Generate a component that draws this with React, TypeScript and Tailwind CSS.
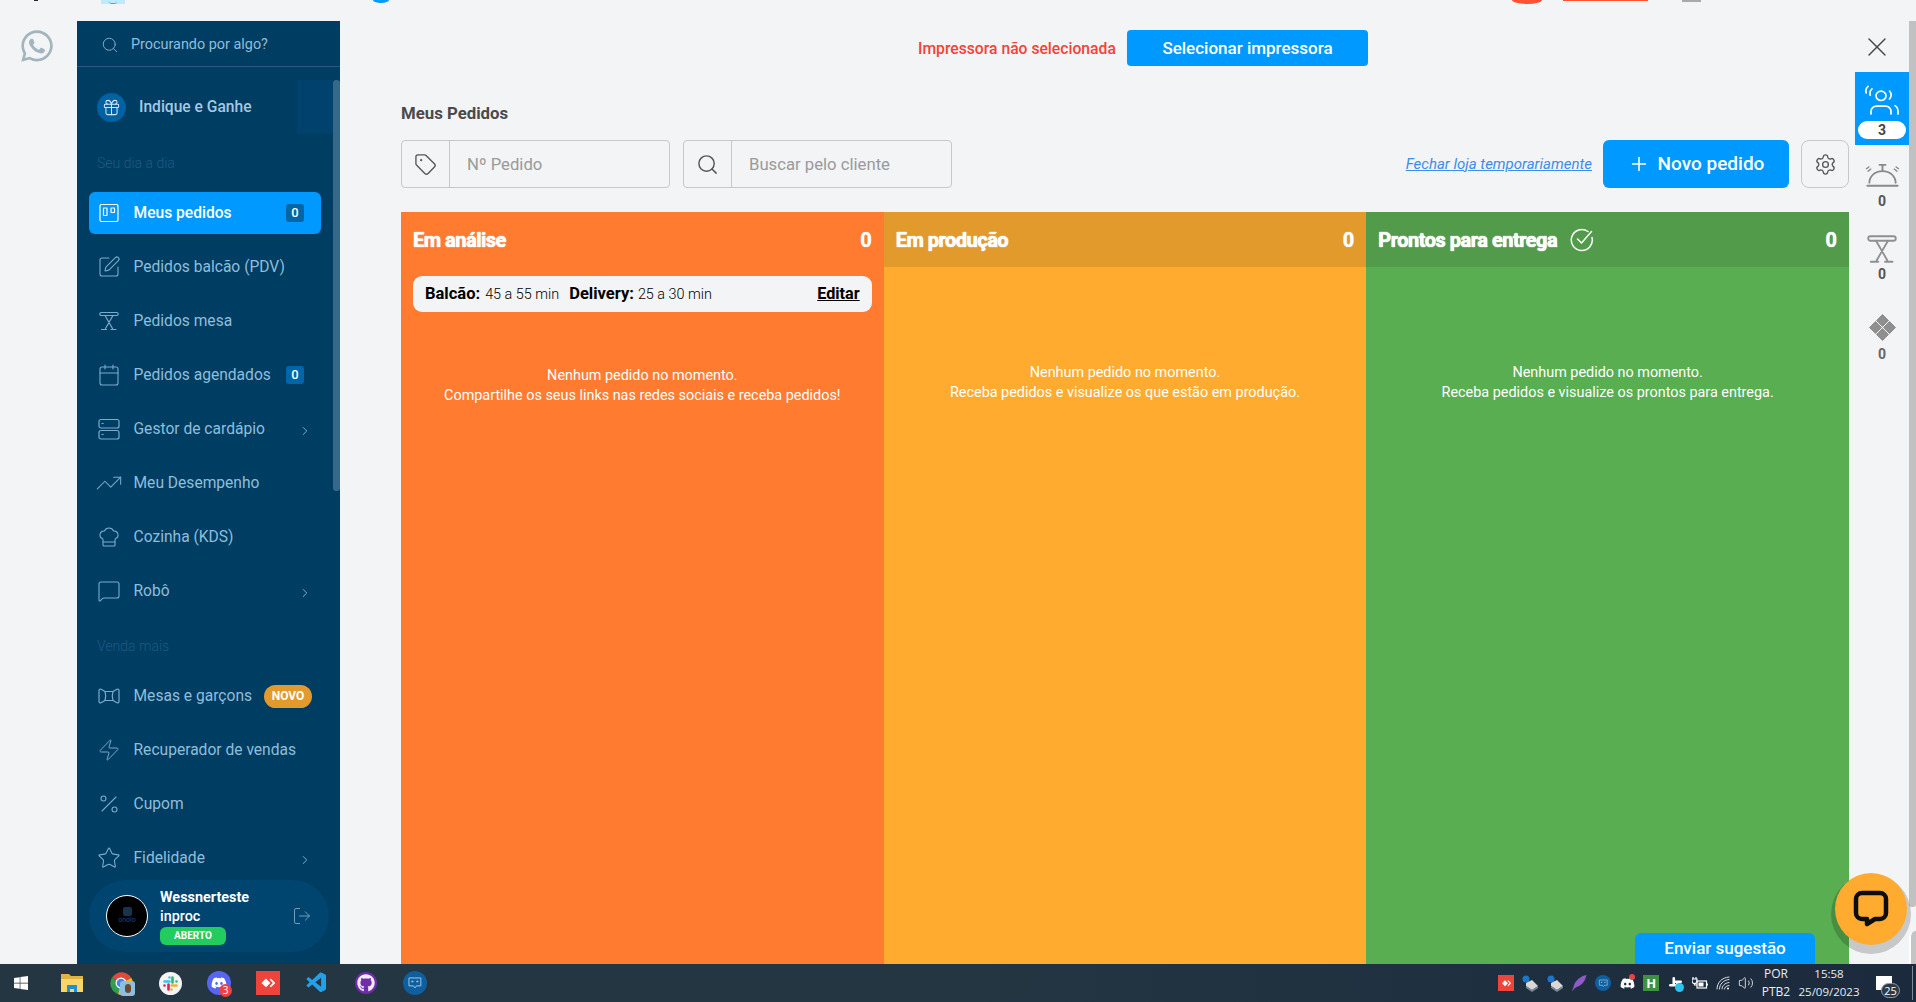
import React from "react";
import {
  Search, Gift, SquarePen, Calendar, TrendingUp, ChefHat, MessageSquare, Zap, Percent, Star,
  ChevronRight, LogOut, Tag, Plus, Settings, X, Volume2,
} from "lucide-react";
import { FaWhatsapp, FaWindows, FaGithub, FaDiscord } from "react-icons/fa";
import { VscVscode } from "react-icons/vsc";

const s = { fill: "none", stroke: "currentColor", strokeWidth: 1.2, strokeLinecap: "round" as const, strokeLinejoin: "round" as const };

const BoardIcon = () => (
  <svg width="20" height="20" viewBox="0 0 20 20" {...s}>
    <rect x="1" y="1.5" width="18" height="17" rx="1.5" />
    <rect x="4.5" y="5" width="3.5" height="7.5" rx=".4" />
    <rect x="12" y="5" width="3.5" height="4.5" rx=".4" />
  </svg>
);
const TableIcon = ({ size = 20 }: { size?: number }) => (
  <svg width={size} height={size} viewBox="0 0 20 20" {...s}>
    <rect x="0.8" y="1.5" width="18.4" height="3" rx="1.5" />
    <path d="M6 4.5 13.5 17.5M14 4.5 6.5 17.5M2.5 18.5h5M12 18.5h5" />
  </svg>
);
const MenuIcon = () => (
  <svg width="22" height="22" viewBox="0 0 22 22" {...s}>
    <rect x="1" y="1.5" width="20" height="8.5" rx="2" />
    <rect x="1" y="12.5" width="20" height="8.5" rx="2" />
    <path d="M4 5.5h1.2M4 16.5h1.2" />
  </svg>
);
const BowIcon = () => (
  <svg width="22" height="16" viewBox="0 0 22 16" {...s}>
    <path d="M7 3.5 3 1.2C2 .8 1 1.3 1 2.5v11c0 1.2 1 1.7 2 1.3l4-2.3C7.800 10 7.800 6 7 3.500z" />
    <path d="M15 3.5l4-2.3c1-.4 2 .1 2 1.3v11c0 1.2-1 1.7-2 1.3l-4-2.3C14.200 10 14.200 6 15 3.500z" />
    <path d="M7 3.5h8M7 12.500h8" />
  </svg>
);
const BellIcon = () => (
  <svg width="35" height="25" viewBox="0 0 36 30" preserveAspectRatio="none" fill="none" stroke="#8a8a8a" strokeWidth="2" strokeLinecap="round">
    <path d="M4.5 25c0-8 5.8-14 13.500-14s13.500 6 13.500 14" />
    <path d="M15 3.500h6M18 3.500V10" />
    <path d="M2.500 28.500h31" strokeWidth="2.200" />
    <path d="M1.500 8 4 6M3 11l3-2.500M34.500 8 32 6M33 11l-3-2.500" strokeWidth="1.500" />
  </svg>
);
const PersonIcon = () => (
  <svg width="35" height="31" viewBox="0 0 35 33" preserveAspectRatio="none" fill="none" stroke="#fff" strokeWidth="1.700" strokeLinecap="round">
    <circle cx="16" cy="11.500" r="5" />
    <path d="M7 4c-2 2-2.500 4-1.800 7M3 1.500C.8 3.500.5 6 1.200 8.500M24.500 6.500c2 2.500 2 6 0 8.500" />
    <path d="M6 31v-3c0-3 2.500-5.500 5.500-5.500h9c3 0 5.500 2.500 5.500 5.500v3M30 22c2.500 1.500 3.500 4.500 3 9" />
  </svg>
);
const DiamondIcon = () => (
  <svg width="27" height="27" viewBox="0 0 27 27" fill="#8f8f8f" stroke="#8f8f8f" strokeWidth="1" strokeLinejoin="round">
    <path d="M13.500 .5l6 6-6 6-6-6zM6.500 7.500l6 6-6 6-6-6zM20.500 7.500l6 6-6 6-6-6zM13.500 14.500l6 6-6 6-6-6z" />
  </svg>
);
const CheckCircle = () => (
  <svg width="24" height="24" viewBox="0 0 24 24" fill="none" stroke="#fff" strokeWidth="1.500" strokeLinecap="round" strokeLinejoin="round">
    <path d="M18 3.500A10.500 10.500 0 1 0 22 9.500" />
    <path d="M7.500 11l4 4L21.500 3.500" />
  </svg>
);

const navClass = "ml-[12px] mr-[19px] mb-[12px] flex h-[42px] shrink-0 items-center rounded-[6px] pl-[9px] text-[15.600px] text-[#8fbddc]";
const iconBox = "flex h-[22px] w-[21px] items-center justify-center text-[#7aabcb] [&>svg]:shrink-0";

function NavItem({ icon, label, active, badge, chevron, novo, last }: { icon: React.ReactNode; label: string; active?: boolean; badge?: boolean; chevron?: boolean; novo?: boolean; last?: boolean }) {
  return (
    <div className={navClass + (active ? " !text-white bg-[#0099ff] font-medium" : "") + (last ? " !mb-0" : "")}>
      <span className={iconBox + (active ? " !text-white" : "")}>{icon}</span>
      <span className="ml-[14.500px] mt-[1px] whitespace-nowrap">{label}</span>
      {badge && <span className="ml-auto mr-[17px] flex h-[18px] w-[18px] items-center justify-center rounded-[3px] bg-[#0066a8] text-[13px] font-medium text-white">0</span>}
      {chevron && <ChevronRight size={14} strokeWidth={1.500} className="ml-auto mr-[9px] mt-[3px] text-[#8fbddc]" />}
      {novo && <span className="ml-auto mr-[9px] flex h-[23px] w-[48px] items-center justify-center rounded-full bg-[#e29a2c] text-[12px] font-bold text-white">NOVO</span>}
    </div>
  );
}

function Column({ title, head, body, lines, check, children, textPt }: { title: string; head: string; body: string; lines: string[]; check?: boolean; children?: React.ReactNode; textPt: string }) {
  return (
    <section className={"flex w-[482.670px] flex-col " + body}>
      <header className={"flex h-[55px] shrink-0 items-center px-[12px] text-white " + head}>
        <h2 className="text-[20px] font-bold tracking-[-0.5px] [text-shadow:0_0_1px_#fff,0_0_1px_#fff]">{title}</h2>
        {check && <span className="ml-[13px] flex"><CheckCircle /></span>}
        <span className="ml-auto text-[20px] font-bold [text-shadow:0_0_1px_#fff]">0</span>
      </header>
      {children}
      <div className={"text-center text-[14.400px] leading-[19.500px] text-white " + textPt}>
        {lines.map((l) => (
          <p key={l}>{l}</p>
        ))}
      </div>
    </section>
  );
}

const ChromeIcon = () => (
  <span className="relative flex h-[24px] w-[24px]">
    <svg width="24" height="24" viewBox="0 0 24 24">
      <path d="M12 12 3 6.500A11.500 11.500 0 0 1 22.500 7z" fill="#e2483c" />
      <path d="M12 12 3 6.500A11.500 11.500 0 0 0 9 23.200z" fill="#2f9e4f" />
      <path d="M12 12l10.500-5A11.500 11.500 0 0 1 9 23.200z" fill="#f4c20d" />
      <circle cx="12" cy="12" r="5.500" fill="#fff" />
      <circle cx="12" cy="12" r="4.300" fill="#4285f4" />
    </svg>
    <span className="absolute left-[11px] top-[10px] flex h-[15px] w-[15px] items-center justify-center rounded-[3px] bg-[#8cbfe0]">
      <span className="h-[9px] w-[6px] rounded-full bg-[#6b4a32]" />
    </span>
  </span>
);
const SlackGlyph = () => (
  <svg width="15" height="15" viewBox="0 0 15 15" strokeWidth="2.600" strokeLinecap="round" fill="none">
    <path d="M1.500 5.500h5M6.500 1.500h.01" stroke="#36c5f0" />
    <path d="M9.500 1.500v5M13.500 5.500h.01" stroke="#2eb67d" />
    <path d="M8.500 9.500h5M8.500 13.500h.01" stroke="#ecb22e" />
    <path d="M5.500 8.500v5M1.500 9.500h.01" stroke="#e01e5a" />
  </svg>
);
const SlackIcon = () => (
  <span className="flex h-[23px] w-[23px] items-center justify-center rounded-full bg-[#f4f4f4]">
    <SlackGlyph />
  </span>
);
const DiscordIcon = () => (
  <span className="relative flex h-[24px] w-[24px] items-center justify-center rounded-full bg-[#5865f2]">
    <FaDiscord size={16} color="#fff" />
    <span className="absolute left-[12px] top-[13px] flex h-[13px] w-[13px] items-center justify-center rounded-full bg-[#ed4245] text-[10px] font-medium text-white">3</span>
  </span>
);
const AnyDesk = ({ size }: { size: number }) => (
  <span className="flex shrink-0 items-center justify-center bg-[#ef443b]" style={{ width: size, height: size }}>
    <svg width={size * 0.66} height={size * 0.66} viewBox="0 0 16 16" fill="#fff">
      <path d="M6 3.500 10.500 8 6 12.500 1.500 8z" />
      <path d="M11 3.500 15.500 8 11 12.500 9.800 11.300 13 8 9.800 4.700z" />
    </svg>
  </span>
);
const OwlIcon = ({ size }: { size: number }) => (
  <span className="flex shrink-0 items-center justify-center rounded-full bg-[#0f5f9e]" style={{ width: size, height: size }}>
    <svg width={size * 0.66} height={size * 0.66} viewBox="0 0 16 16" fill="none" stroke="#9cc9ea" strokeWidth="1">
      <path d="M2 3h12v8H9.500L8 13l-1.500-2H2z" />
      <path d="M4.500 6.500h2M9.500 6.500h2" strokeWidth="1.500" />
    </svg>
  </span>
);
const FolderIcon = () => (
  <svg width="22" height="20" viewBox="0 0 22 20">
    <path d="M0 1h8l2 2h12v16H0z" fill="#e3b341" />
    <path d="M0 6h22v13H0z" fill="#f6d56b" />
    <path d="M6 12h10v7h-3v-3H9v3H6z" fill="#1f8fd8" />
  </svg>
);
const PrinterTray = () => (
  <svg className="shrink-0" width="16" height="17" viewBox="0 0 16 17">
    <circle cx="4" cy="4" r="3.500" fill="#1976c8" />
    <path d="M4 8 10 5l6 6-6 4-6-4z" fill="#d8d8d8" />
    <path d="M4 11l6 4 6-4v2l-6 4-6-4z" fill="#7d8790" />
  </svg>
);
const Feather = () => (
  <svg className="shrink-0" width="16" height="16" viewBox="0 0 16 16">
    <path d="M15.500 0C10 1 4 5 2.500 12l-1.500 4 1-.5C3 13 4.500 12.500 8 11c4-2 6.500-6 7.500-11z" fill="#8e5bc4" />
  </svg>
);
const BatteryTray = () => (
  <svg className="shrink-0" width="16" height="14" viewBox="0 0 16 14" fill="none" stroke="#fff" strokeWidth="1.200">
    <path d="M1 1v2M4 1v2M0 3h5v2a2.500 2.500 0 0 1-5 0zM2.500 7v2H5" />
    <rect x="5" y="5" width="9.500" height="7" />
    <rect x="6.500" y="6.500" width="5" height="4" fill="#fff" stroke="none" />
    <path d="M15.500 7.500v2" />
  </svg>
);
const WifiTray = () => (
  <svg className="shrink-0" width="14" height="14" viewBox="0 0 14 14" fill="none" stroke="#d8dde2" strokeWidth="1" strokeLinecap="round">
    <path d="M1 13C1 7 5.500 1.500 13 1M3.500 13c0-4.500 3.500-9 9.500-9.500M6 13c0-3 2.500-6 7-6.500M8.500 13c0-1.500 1.500-3.300 4.500-3.500" />
    <circle cx="12" cy="12.500" r="1" fill="#fff" stroke="none" />
  </svg>
);

export default function App() {
  return (
    <div className="relative flex h-[1002px] w-[1916px] flex-col overflow-hidden bg-[#f2f4f6] font-[family-name:Roboto,sans-serif]">
      {/* clipped remains of the page header */}
      <div className="flex h-[21px] shrink-0 items-start">
        <span className="ml-[34px] h-[1px] w-[4px] bg-[#1f2937]" />
        <span className="ml-[63px] flex h-[4px] w-[24px] justify-center bg-[#bfe9ff]">
          <span className="h-[4px] w-[8px] rounded-b-[3px] border-b border-[#3aa6f0]" />
        </span>
        <span className="ml-[248px] h-[3px] w-[16px] rounded-[0_0_50%_50%/0_0_100%_100%] bg-[#0099ff]" />
        <span className="ml-[1123px] h-[4px] w-[30px] rounded-[0_0_50%_50%/0_0_100%_100%] bg-[#ff5232]" />
        <span className="ml-[21px] h-[1px] w-[85px] bg-[#ff5232]" />
        <span className="ml-[34px] h-[2px] w-[19px] bg-[#a9a9a9]" />
      </div>

      <div className="relative flex min-h-0 flex-1">
        {/* whatsapp rail */}
        <div className="w-[77px] shrink-0 pl-[19px] pt-[7px]">
          <FaWhatsapp size={36} color="#a2b4bd" />
        </div>

        {/* sidebar */}
        <aside className="relative flex w-[263px] shrink-0 flex-col bg-[#003d62]">
          <div className="flex h-[46px] shrink-0 items-center border-b border-[#2c5a7c] pl-[24px] pt-[2px] text-[14.400px] text-[#8fbddc]">
            <Search size={18} strokeWidth={1.200} className="text-[#8fb3cb]" />
            <span className="ml-[12px]">Procurando por algo?</span>
          </div>
          <div className="relative mt-[13px] flex h-[54px] shrink-0 items-center pl-[20px]">
            <span className="flex h-[29px] w-[29px] items-center justify-center rounded-full bg-[#0061a3] text-[#cfe6f6]">
              <Gift size={19} strokeWidth={1.300} />
            </span>
            <span className="ml-[13px] mt-[1px] text-[15.600px] font-medium text-[#a5c9e2]">Indique e Ganhe</span>
            <span className="absolute inset-y-0 left-[220px] w-[36px] bg-[#00426e]" />
          </div>
          <div className="flex h-[58px] shrink-0 items-start pl-[20px] pt-[19px] text-[14px] font-light text-[#1f5a82]">Seu dia a dia</div>
          <NavItem icon={<BoardIcon />} label="Meus pedidos" active badge />
          <NavItem icon={<SquarePen size={24} strokeWidth={1.100} />} label="Pedidos balcão (PDV)" />
          <NavItem icon={<TableIcon />} label="Pedidos mesa" />
          <NavItem icon={<Calendar size={24} strokeWidth={1.100} />} label="Pedidos agendados" badge />
          <NavItem icon={<MenuIcon />} label="Gestor de cardápio" chevron />
          <NavItem icon={<TrendingUp size={28} strokeWidth={0.900} />} label="Meu Desempenho" />
          <NavItem icon={<ChefHat size={24} strokeWidth={1.100} />} label="Cozinha (KDS)" />
          <NavItem icon={<MessageSquare size={24} strokeWidth={1.100} />} label="Robô" chevron />
          <div className="h-[51px] shrink-0 pl-[20px] pt-[12px] text-[14px] font-light text-[#1f5a82]">Venda mais</div>
          <NavItem icon={<BowIcon />} label="Mesas e garçons" novo />
          <NavItem icon={<Zap size={24} strokeWidth={1} />} label="Recuperador de vendas" />
          <NavItem icon={<Percent size={24} strokeWidth={1.100} />} label="Cupom" />
          <NavItem icon={<Star size={24} strokeWidth={1.100} />} label="Fidelidade" chevron last />
          <div className="ml-[12px] mt-[1px] flex h-[72px] w-[240px] shrink-0 items-center rounded-full bg-[#004470] pl-[17px]">
            <span className="flex h-[42px] w-[42px] shrink-0 flex-col items-center justify-center rounded-full border border-white bg-black">
              <span className="h-[9px] w-[9px] rounded-[2px] bg-[#16344d]" />
              <span className="text-[7px] leading-[9px] text-[#1c4a72]">onolo</span>
            </span>
            <div className="ml-[12px] flex w-[120px] flex-col items-start">
              <span className="text-[14.400px] font-bold leading-[19px] text-white">Wessnerteste</span>
              <span className="text-[14.400px] font-medium leading-[19px] text-white">inproc</span>
              <span className="mt-[1px] flex h-[18px] w-[66px] items-center justify-center rounded-[6px] bg-[#22cc5e] text-[10px] font-bold text-white">ABERTO</span>
            </div>
            <LogOut size={20} strokeWidth={1.100} className="ml-[12px] text-[#7fa6c0]" />
          </div>
          <span className="absolute right-0 top-[59px] h-[411px] w-[7px] rounded-[3px] bg-[#36688a]" />
        </aside>

        {/* main */}
        <main className="flex w-[1515px] shrink-0 flex-col pl-[61px] pr-[6px] pt-[9px]">
          <div className="ml-[517px] flex h-[36px] shrink-0 items-center">
            <span className="mt-[1px] w-[198px] whitespace-nowrap text-[15.700px] font-medium text-[#f44336]">Impressora não selecionada</span>
            <button className="ml-[11px] h-[36px] w-[241px] rounded-[4px] bg-[#0099ff] pt-[1px] text-[17px] font-medium text-white">Selecionar impressora</button>
          </div>
          <h1 className="mt-[37px] h-[20px] shrink-0 text-[16.800px] font-bold leading-[20px] text-[#4a4a4a]">Meus Pedidos</h1>
          <div className="mt-[17px] flex h-[48px] shrink-0 items-center">
            <div className="flex h-[48px] w-[269px] rounded-[4px] border border-[#c6c8ca]">
              <span className="flex w-[48px] items-center justify-center border-r border-[#c6c8ca] text-[#555]">
                <Tag size={23} strokeWidth={1.400} />
              </span>
              <span className="flex items-center pl-[17px] pt-[1px] text-[16.700px] text-[#9a9a9a]">Nº Pedido</span>
            </div>
            <div className="ml-[13px] flex h-[48px] w-[269px] rounded-[4px] border border-[#c6c8ca]">
              <span className="flex w-[48px] items-center justify-center border-r border-[#c6c8ca] text-[#555]">
                <Search size={23} strokeWidth={1.500} />
              </span>
              <span className="flex items-center pl-[17px] pt-[1px] text-[16.700px] text-[#9a9a9a]">Buscar pelo cliente</span>
            </div>
            <a className="ml-auto whitespace-nowrap text-[15px] italic text-[#3b8eea] underline">Fechar loja temporariamente</a>
            <button className="ml-[11px] flex h-[48px] w-[186px] items-center justify-center gap-[8px] rounded-[6px] bg-[#0099ff] text-[19px] font-medium text-white">
              <Plus size={22} strokeWidth={1.700} />
              Novo pedido
            </button>
            <button className="ml-[12px] flex h-[48px] w-[48px] items-center justify-center rounded-[8px] border border-[#c6c8ca] text-[#555]">
              <Settings size={23} strokeWidth={1.400} />
            </button>
          </div>
          <div className="mt-[24px] flex min-h-0 flex-1">
            <Column title="Em análise" head="bg-[#ff7b30]" body="bg-[#ff7b30]" textPt="pt-[54px]" lines={["Nenhum pedido no momento.", "Compartilhe os seus links nas redes sociais e receba pedidos!"]}>
              <div className="mx-[12px] mt-[9px] flex h-[36px] shrink-0 items-center rounded-[9px] bg-[#f2f4f6] px-[12px] pt-[1px] text-black">
                <b className="text-[16.500px] font-bold">Balcão:</b>
                <span className="ml-[5px] text-[14.400px] font-light">45 a 55 min</span>
                <b className="ml-[10px] text-[16.500px] font-bold">Delivery:</b>
                <span className="ml-[4px] text-[14.400px] font-light">25 a 30 min</span>
                <a className="ml-auto text-[16.200px] font-bold underline">Editar</a>
              </div>
            </Column>
            <Column title="Em produção" head="bg-[#e29a2c]" body="bg-[#ffab30]" textPt="pt-[96px]" lines={["Nenhum pedido no momento.", "Receba pedidos e visualize os que estão em produção."]} />
            <Column title="Prontos para entrega" head="bg-[#519b4b]" body="bg-[#58ae51]" check textPt="pt-[96px]" lines={["Nenhum pedido no momento.", "Receba pedidos e visualize os prontos para entrega."]} />
          </div>
        </main>

        {/* right rail */}
        <div className="flex w-[54px] shrink-0 flex-col items-center">
          <span className="mt-[15px] flex h-[22px] w-[54px] items-center justify-center pr-[10px] text-[#444]">
            <X size={32} strokeWidth={1} className="shrink-0" />
          </span>
          <div className="mt-[14px] flex h-[73px] w-[54px] flex-col items-center bg-[#0099ff] pt-[13px]">
            <PersonIcon />
            <span className="mt-[5px] flex h-[18px] w-[48px] items-center justify-center rounded-full bg-white text-[14px] font-bold leading-none text-[#444]">3</span>
          </div>
          <div className="mt-[17px] flex"><BellIcon /></div>
          <span className="mt-[6px] text-[14px] font-bold leading-[16px] text-[#555]">0</span>
          <div className="mt-[25px] flex h-[30px] items-center text-[#8f8f8f]"><TableIcon size={30} /></div>
          <span className="mt-[2px] text-[14px] font-bold leading-[16px] text-[#555]">0</span>
          <div className="mt-[32px] flex"><DiamondIcon /></div>
          <span className="mt-[5px] text-[14px] font-bold leading-[16px] text-[#666]">0</span>
        </div>

        {/* page scrollbar */}
        <div className="flex w-[7px] shrink-0 flex-col">
          <span className="h-[886px] rounded-b-[3px] bg-[#c1c1c1]" />
          <span className="mt-[24px] h-[33px] rounded-tl-[6px] border-l-2 border-white bg-[#c4c4c4]" />
        </div>

        {/* floating */}
        <button className="absolute bottom-0 left-[1635px] h-[31px] w-[180px] rounded-t-[6px] bg-[#0099ff] text-[17px] font-medium text-white">Enviar sugestão</button>
        <span className="absolute left-[1835px] top-[852px] flex h-[72px] w-[72px] items-center justify-center rounded-full bg-[#ffab30] shadow-[0_5px_0_4px_rgba(0,0,0,0.18)]">
          <svg width="36" height="38" viewBox="0 0 36 38" fill="none">
            <path d="M9 3h18a6 6 0 0 1 6 6v14a6 6 0 0 1-6 6h-5l-8 5v-5H9a6 6 0 0 1-6-6V9a6 6 0 0 1 6-6z" stroke="#0d0d0d" strokeWidth="4.500" strokeLinejoin="round" />
          </svg>
        </span>
      </div>

      {/* windows taskbar */}
      <footer className="relative flex h-[38px] shrink-0 items-center bg-gradient-to-r from-[#233642] via-[#233642] to-[#1b2a3d] pl-[13px] font-[family-name:'Open_Sans',sans-serif] text-[#e8edf1]">
        <FaWindows size={16} color="#fff" />
        <div className="ml-[18.500px] flex items-center">
          <span className="flex w-[49px] justify-center"><FolderIcon /></span>
          <span className="flex w-[49px] justify-center"><ChromeIcon /></span>
          <span className="flex w-[49px] justify-center"><SlackIcon /></span>
          <span className="flex w-[49px] justify-center"><DiscordIcon /></span>
          <span className="flex w-[49px] justify-center"><AnyDesk size={24} /></span>
          <span className="flex w-[49px] justify-center"><VscVscode size={24} color="#23a0e8" /></span>
          <span className="flex w-[49px] justify-center">
            <span className="flex h-[22px] w-[22px] items-center justify-center rounded-full bg-[#6f2da8]"><FaGithub size={18} color="#f4e9ff" /></span>
          </span>
          <span className="flex w-[49px] justify-center"><OwlIcon size={24} /></span>
        </div>

        <div className="ml-auto flex items-center">
          <div className="flex items-center gap-[8.200px]">
            <AnyDesk size={16} />
            <PrinterTray />
            <PrinterTray />
            <Feather />
            <OwlIcon size={16} />
            <span className="relative flex w-[16px] justify-center">
              <FaDiscord size={15} color="#fff" />
              <span className="absolute -top-[2px] right-0 h-[6px] w-[6px] rounded-full bg-[#ed4245]" />
            </span>
            <span className="flex h-[16px] w-[16px] items-center justify-center bg-[#3f9142] text-[13px] font-bold leading-none text-white">H</span>
            <span className="relative flex h-[16px] w-[16px] items-center justify-center">
              <svg width="13" height="13" viewBox="0 0 15 15" strokeWidth="3" strokeLinecap="round" stroke="#fff" fill="none">
                <path d="M5.500 1.500v6M1.500 9.500h6M9.500 13.500v-6M13.500 5.500h-6" />
              </svg>
              <span className="absolute -bottom-[1px] -right-[1px] h-[9px] w-[9px] rounded-full bg-[#29c3ee]" />
            </span>
            <BatteryTray />
            <WifiTray />
            <Volume2 size={16} strokeWidth={1.300} color="#e8edf1" className="shrink-0" />
          </div>
          <div className="ml-[10px] flex w-[24px] flex-col items-center text-[12px] leading-[18px]">
            <span>POR</span>
            <span>PTB2</span>
          </div>
          <div className="ml-[12px] flex w-[58px] flex-col items-center whitespace-nowrap text-[11.500px] leading-[18px]">
            <span>15:58</span>
            <span>25/09/2023</span>
          </div>
          <span className="relative ml-[18px] mr-[24px] h-[14px] w-[16px] bg-white">
            <span className="absolute left-[5px] top-[7px] flex h-[15px] w-[19px] items-center justify-center rounded-full border border-[#8fa0a8] bg-[#2b3a46] text-[11px] leading-none text-white">25</span>
          </span>
          <span className="absolute bottom-[2px] right-[3px] h-[34px] w-[1px] bg-[#7f8a94]" />
        </div>
      </footer>
    </div>
  );
}
